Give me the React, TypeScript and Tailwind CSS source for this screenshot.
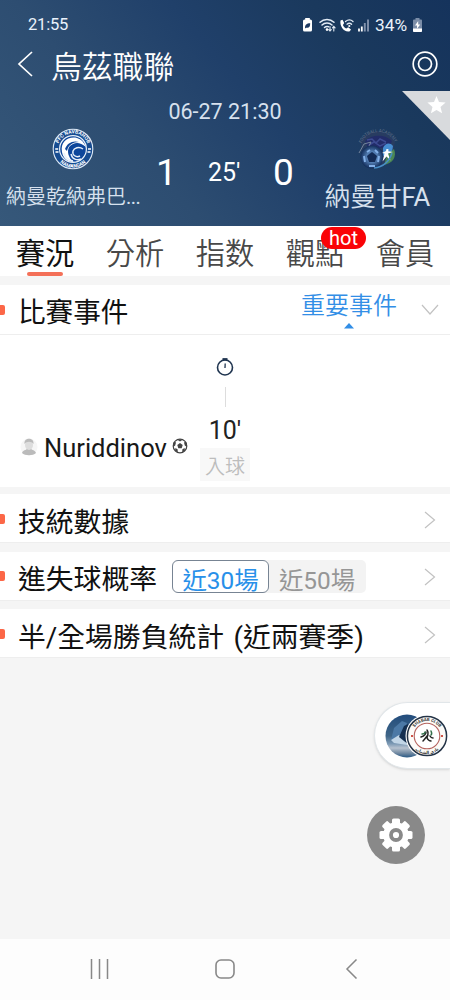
import React from "react";

const FONT = "font-['Roboto','Noto_Sans_CJK_TC',sans-serif]";

function StatusIcons() {
  return (
    <svg width="67" height="16" viewBox="0 0 67 16" className="block">
      <rect x="2.2" y="1" width="4.6" height="3" fill="#fff" />
      <rect x="0" y="2.5" width="9" height="12" rx="1.6" fill="#fff" />
      <path d="M2 11.5c0-4 1.5-5 5.200-5.200 0 3.700-1.200 5-4.200 4.400z" fill="#1b3861" />
      <g fill="none" stroke="#e3ebf5" strokeWidth="1.500" strokeLinecap="round">
        <path d="M17 5.300a10 10 0 0 1 14 0M19 8a7 7 0 0 1 10 0M21.500 10.500a4 4 0 0 1 4-.8" />
        <path d="M27 9.500v4.500m-1.300-1.300L27 14l1.300-1.300M30.800 14V9.300m-1.300 1.500 1.300-1.500 1.300 1.500" strokeWidth="1.100" />
      </g>
      <circle cx="24" cy="12.600" r="1.300" fill="#fff" />
      <path d="M37.500 3.500l2-.8 1.700 3.300-1.300 1.900c.8 1.800 1.900 2.900 3.400 3.500l1.900-1.200 2.800 2.300-1.200 1.800c-5.500 1.500-10.300-4.800-9.300-10.800z" fill="#fff" />
      <g fill="none" stroke="#e3ebf5" strokeWidth="1.300" strokeLinecap="round">
        <path d="M42.500 4.500c2.500-2 5.500-1.900 7.500 0M44 7.200c1.500-1.200 3.300-1.100 4.600.1" />
      </g>
      <circle cx="46.300" cy="9" r="1.100" fill="#fff" />
      <path d="M56 14.500v-3M58.800 14.500v-5" stroke="#fff" strokeWidth="1.800" />
      <path d="M61.800 14.500V6M65 14.500V2.500" stroke="#8091ac" strokeWidth="1.900" />
    </svg>
  );
}

function BatteryIcon() {
  return (
    <svg width="9" height="14" viewBox="0 0 9 14" className="mt-px block">
      <path d="M2.500 0h4v1.500H8a1 1 0 0 1 1 1V13a1 1 0 0 1-1 1H1a1 1 0 0 1-1-1V2.500a1 1 0 0 1 1-1h1.500z" fill="#7b8da8" />
      <path d="M0 10.500h9V13a1 1 0 0 1-1 1H1a1 1 0 0 1-1-1z" fill="#fff" />
      <path d="M5.200 3 2 7.500h2v3.200L7.200 6.500h-2z" fill="#fff" />
    </svg>
  );
}

function HomeCrest() {
  return (
    <svg width="42" height="42" viewBox="0 0 42 42" className="-mt-px block">
      <defs>
        <path id="homeTop" d="M6.200 24a15.200 15.200 0 1 1 29.600 0" />
        <path id="homeBottom" d="M3.300 25a18 18 0 0 0 35.400 0" />
      </defs>
      <circle cx="21" cy="21" r="19.800" fill="#174c91" stroke="#dce8f5" strokeWidth="1.100" />
      <circle cx="21" cy="21" r="13.400" fill="#0d469b" stroke="#e8f1fa" strokeWidth="1.200" />
      <g fill="#fff" fontSize="5" fontWeight="700" fontFamily="Roboto, sans-serif">
        <text><textPath href="#homeTop" startOffset="50%" textAnchor="middle">PFC NAVBAHOR</textPath></text>
        <text><textPath href="#homeBottom" startOffset="50%" textAnchor="middle">NAMANGAN</textPath></text>
      </g>
      <path d="M3.200 21h3M36 21h3M3.500 24h3M35.500 24h3" stroke="#fff" strokeWidth="1.500" />
      <path d="M10 24C8 14 16 8 25 10c4 1 7 4 9 9-5-4-9-5-13-3-5 2-6 7-4 12 1 3 3 5 5 6-7 0-11-4-12-10z" fill="#fff" />
      <path d="M13 21c2-6 8-9 14-7-6 0-11 3-12 9z" fill="#0d469b" />
      <path d="M31 21c-4-3-9-1-10 2-1 4 3 7 7 5m-9-2c1 5 6 7 10 5M12 25c1 4 4 7 9 8" fill="none" stroke="#e7f0fa" strokeWidth="1.400" />
    </svg>
  );
}

function AwayCrest() {
  return (
    <svg width="42" height="44" viewBox="0 0 42 44" className="-mt-px block">
      <defs>
        <path id="awayTop" d="M4 17C8 0 34 0 38 16" />
        <radialGradient id="ballShade">
          <stop offset="0" stopColor="#122b58" />
          <stop offset=".45" stopColor="#547fb5" />
          <stop offset="1" stopColor="#132e5b" />
        </radialGradient>
      </defs>
      <path d="M4 14C8 0 33 0 38 14L35 28C30 43 10 43 5 29z" fill="#283c61" />
      <path d="M8 13c7-7 20-7 27 0l-3 7H11z" fill="#222c69" />
      <text fontSize="4.300" fill="#65748c" fontFamily="Roboto, sans-serif"><textPath href="#awayTop" startOffset="50%" textAnchor="middle">FOOTBALL ACADEMY</textPath></text>
      <path d="M10 12l5-1 4 4 4-4 6 3M12 17l5-3 6 4 6-3" fill="none" stroke="#3d4b91" strokeWidth="1.500" />
      <path d="M2 25l5-9 7-2-2 4" fill="none" stroke="#75859d" />
      <circle cx="15" cy="29" r="11.500" fill="url(#ballShade)" />
      <path d="M15 24l5 4-2 6h-6l-2-6z" fill="#142b55" />
      <path d="M10 24l3-2m5 0 3 3M7 28l1 6m14-6-1 6m-9 4h6" stroke="#83b0e8" strokeWidth="2" />
      <path d="M26 20c2-5 7-6 10-2l-1 6-9 4z" fill="#468dd1" />
      <path d="M37 21c3 8-1 14-10 16l3-10z" fill="#4b8855" />
      <path d="M25 25l4-2 .5-2 2 .2-.2 2 4.700.8-5 1.500 2.500 7-4-4-4 5 2-8z" fill="#fff" />
      <path d="M17 40c10-1 15-6 18-15" fill="none" stroke="#488dc7" strokeWidth="1.500" />
    </svg>
  );
}

function Header() {
  return (
    <header className="h-[226px] bg-[linear-gradient(50deg,#36587a_0%,#2d4d71_32%,#20406a_56%,#1a395d_78%,#15335c_100%)] text-[#eaf2fb]">
      <div className="flex h-[45px] items-start pt-[17px] pl-7 text-[16.5px] leading-4">
        <span className="w-[275px] tracking-[-0.2px]">21:55</span>
        <StatusIcons />
        <span className="ml-[5px] w-[38px] text-[17.300px]">34%</span>
        <BatteryIcon />
      </div>
      <div className="flex h-[46px] items-start">
        <svg width="16" height="26" viewBox="0 0 16 26" className="mt-[6px] ml-[17px]">
          <path d="M15 1 2 13l13 12" fill="none" stroke="#fff" strokeWidth="1.700" />
        </svg>
        <h1 className="ml-[18px] w-[361px] pt-[2px] text-[30.800px] leading-[42px] font-[350] text-white">烏茲職聯</h1>
        <svg width="26" height="26" viewBox="0 0 26 26" className="mt-[6px]">
          <g fill="none" stroke="#fff" strokeWidth="1.700">
            <circle cx="13" cy="13" r="11.800" />
            <circle cx="13" cy="13" r="6.500" />
          </g>
        </svg>
      </div>
      <div className="flex h-[38px] justify-between">
        <div className="w-12" />
        <time className="pt-[8px] text-[21.500px] leading-[26px] text-[#d7e1ee]">06-27 21:30</time>
        <svg width="48" height="49" viewBox="0 0 48 49" className="block overflow-visible">
          <path d="M0 0h48v49z" fill="#d8dadd" />
          <path d="m34.500 5 2.500 6.100 6.600.5-5.100 4.300 1.600 6.400-5.600-3.400-5.600 3.400 1.600-6.400-5.100-4.300 6.600-.5z" fill="#fff" />
        </svg>
      </div>
      <div className="grid h-[97px] grid-cols-[145px_160px_145px]">
        <div className="flex flex-col items-center">
          <HomeCrest />
          <span className="mt-[13px] w-[145px] pl-[6px] text-[20px] leading-[28px] font-[350] whitespace-nowrap text-[#d7e1ee]">納曼乾納弗巴<span className="font-normal tracking-[-0.5px]">...</span></span>
        </div>
        <div className="flex items-center pb-[9px]">
          <span className="w-[61px] pl-[11px] text-[37px] leading-10 text-white">1</span>
          <span className="w-[67px] pl-[2px] text-[25px] leading-8 text-white">25'</span>
          <span className="text-[37px] leading-10 text-white">0</span>
        </div>
        <div className="flex flex-col items-center">
          <AwayCrest />
          <span className="mt-[8px] text-[25.600px] leading-[34px] font-[350] whitespace-nowrap text-[#d7e1ee]">納曼甘<span className="font-normal">FA</span></span>
        </div>
      </div>
    </header>
  );
}

const tabs = ["賽況", "分析", "指数", "觀點", "會員"];

function Tabs() {
  return (
    <nav className="grid h-[50px] grid-cols-5 bg-white text-[29.300px] leading-[56px] text-[#484848]">
      {tabs.map((tab, i) => (
        <div key={tab} className={i === 0 ? "relative h-[50px] text-center font-normal text-[#111]" : "relative h-[50px] text-center font-[350]"}>
          {tab}
          {i === 0 && <span className="absolute bottom-0 left-[27px] h-1 w-[36px] rounded-full bg-[#f47058]" />}
          {i === 3 && (
            <span className="absolute top-px left-[51px] h-[22px] w-[45px] rounded-full bg-[#fa0307] text-center text-[20px] leading-[23px] font-normal text-white">hot</span>
          )}
        </div>
      ))}
    </nav>
  );
}

function Marker() {
  return <span className="h-[10px] w-[5px] shrink-0 rounded-r-[2px] bg-[#fc6747]" />;
}

function Chevron() {
  return (
    <svg width="12" height="18" viewBox="0 0 12 18" className="mt-[2px] mr-[14px] ml-auto">
      <path d="m1 1 9.500 8L1 17" fill="none" stroke="#c2c2c2" strokeWidth="1.200" />
    </svg>
  );
}

function Row({ title, children }: { title: string; children?: React.ReactNode }) {
  return (
    <section className="flex h-[49px] items-center border-b border-[#eee] bg-white pt-px">
      <Marker />
      <h2 className="ml-[13px] pt-[8px] text-[27.800px] leading-10 font-normal whitespace-nowrap text-[#111] [word-spacing:2.500px]">{title}</h2>
      {children}
      <Chevron />
    </section>
  );
}

function Events() {
  return (
    <div className="grid h-[152px] grid-cols-[200px_50px_200px] bg-white">
      <div className="flex items-start pt-[96px] pl-[20px]">
        <svg width="18" height="20" viewBox="0 0 18 20" className="mt-[6px]">
          <circle cx="9" cy="10" r="8.500" fill="#f6f6f6" />
          <path d="M2 16c1-3 4-3 5-4h4c1 1 4 1 5 4-3 3-11 3-14 0z" fill="#bbb" />
          <ellipse cx="9" cy="8" rx="4" ry="5" fill="#ddd" />
          <path d="M4.500 7c-1-7 10-7 9 0-2-3-7-3-9 0z" fill="#bbb" />
        </svg>
        <span className="ml-[6px] w-[128px] text-[25.500px] leading-[34px] text-[#181818]">Nuriddinov</span>
        <svg width="16" height="16" viewBox="0 0 16 16" className="mt-[7px] shrink-0">
          <circle cx="8" cy="8" r="6.800" fill="#fff" stroke="#444" strokeWidth="1.200" />
          <path d="m8 5 2.700 2-1 3.200H6.300l-1-3.200zM5 1.500h6L8 3.500zM1 6l1-2.500 2 1-.8 3L1 9zm14 0-1-2.500-2 1 .8 3L15 9zM3 13l.4-3 2.200 1.200.2 3zm10 0-.4-3-2.200 1.200-.2 3z" fill="#444" />
        </svg>
      </div>
      <div className="flex flex-col items-center pt-[22px]">
        <svg width="18" height="20" viewBox="0 0 18 20" className="block">
          <circle cx="9" cy="10.500" r="7.500" fill="none" stroke="#203550" strokeWidth="1.600" />
          <path d="M6.500 2.200h5" stroke="#203550" strokeWidth="2.200" />
          <path d="M9.200 6.500 9 11" stroke="#203550" strokeWidth="1.300" />
        </svg>
        <span className="mt-[10px] h-[20px] w-px bg-[#ddd]" />
        <span className="mt-[8px] text-[25px] leading-[32px] text-[#222]">10'</span>
        <span className="mt-px h-[33px] w-[50px] bg-[#f8f8f8] text-center text-[20px] leading-[39px] font-[350] text-[#bdbdbd]">入球</span>
      </div>
    </div>
  );
}

function ClubBadge() {
  return (
    <svg width="64" height="48" viewBox="0 0 64 48" className="block">
      <defs>
        <linearGradient id="stadium" x2="0" y2="1">
          <stop stopColor="#234d7d" />
          <stop offset=".5" stopColor="#3f6587" />
          <stop offset=".68" stopColor="#7d9ab5" />
          <stop offset=".78" stopColor="#b7c2cf" />
          <stop offset=".9" stopColor="#7189a1" />
          <stop offset="1" stopColor="#295985" />
        </linearGradient>
        <path id="clubTop" d="M27 24a15 15 0 0 1 30 0" />
        <path id="clubBottom" d="M24 24a18 18 0 0 0 36 0" />
      </defs>
      <circle cx="22" cy="24" r="21.500" fill="url(#stadium)" />
      <path d="m6 28 3-12 8-7 5 2-4 18z" fill="#4c79a6" />
      <path d="m6 28 8-5 8 7v3L9 31z" fill="#c1d5e6" />
      <path d="m14 25 5-11 4-2v20l-4-3z" fill="#142f50" />
      <circle cx="42" cy="24" r="21.500" fill="#fff" />
      <circle cx="42" cy="24" r="19.600" fill="#fcfbf8" stroke="#243346" strokeWidth="1.500" />
      <circle cx="42" cy="24" r="12.800" fill="#fff" stroke="#b5635e" strokeWidth="1.100" />
      <g fill="#333" fontSize="4.300" fontWeight="700" fontFamily="Roboto, 'DejaVu Sans', sans-serif">
        <text><textPath href="#clubTop" startOffset="50%" textAnchor="middle">SHABAB CLUB</textPath></text>
        <text><textPath href="#clubBottom" startOffset="50%" textAnchor="middle">نادي الشباب</textPath></text>
      </g>
      <path d="M26 24h2M56 24h2" stroke="#ce5549" strokeWidth="2" />
      <g fill="none" stroke="#222" strokeWidth="1.500" strokeLinecap="round">
        <path d="M36 25c3-1 5-3 5-5M38 29c2-2 3-4 5-6M42 18c2 2 1 5 0 8M42 26c1 2 2 3 4 3M45 24c1 2 2 2 3 2" />
        <path d="M37 22c2 0 3-1 3-2M46 19c1 2 1 3 0 4" stroke="#34704b" />
      </g>
    </svg>
  );
}

function SettingsButton() {
  return (
    <button aria-label="設定" className="flex size-[58px] items-center justify-center rounded-full bg-[#898989]">
      <svg width="34" height="34" viewBox="-17 -17 34 34">
        <g fill="#fff">
          <circle r="12.800" />
          {[0, 45, 90, 135, 180, 225, 270, 315].map((angle) => (
            <rect key={angle} x="-4" y="-16.500" width="8" height="9" rx="1.600" transform={`rotate(${angle})`} />
          ))}
        </g>
        <circle r="5" fill="none" stroke="#898989" strokeWidth="3.800" />
      </svg>
    </button>
  );
}

export default function App() {
  return (
    <div className={`${FONT} flex h-[1000px] w-[450px] flex-col overflow-hidden bg-[#f5f5f5]`}>
      <Header />
      <Tabs />
      <main className="mt-[9px] flex h-[654px] flex-col">
        <section className="flex h-[50px] shrink-0 items-center border-b border-[#eee] bg-white">
          <Marker />
          <h2 className="ml-[13px] w-[283px] pt-[7px] text-[27.600px] leading-10 font-normal text-[#111]">比賽事件</h2>
          <div className="flex flex-col items-center pb-[3px] text-[#328ee6]">
            <span className="h-[36px] text-[24px] leading-[37px] font-[350]">重要事件</span>
            <svg width="10" height="6" viewBox="0 0 10 6" className="-mt-px block"><path d="m5 0 5 5.500H0z" fill="#328ee6" /></svg>
          </div>
          <svg width="18" height="11" viewBox="0 0 18 11" className="ml-[24px]">
            <path d="m1 1 8 9 8-9" fill="none" stroke="#c2c2c2" strokeWidth="1.200" />
          </svg>
        </section>
        <Events />
        <div className="mt-[7px] flex flex-col gap-[8.500px]">
          <Row title="技統數據" />
          <Row title="進失球概率">
            <div className="mt-px ml-[15px] flex h-[33px] w-[194px] rounded-[5px] bg-[#f3f3f3] text-[24.400px] leading-[40px]">
              <span className="h-[33px] w-[97px] rounded-[6px] border border-[#778493] bg-white text-center text-[#2890e9]">近30場</span>
              <span className="h-[33px] w-[96px] text-center leading-[42px] text-[#969696]">近50場</span>
            </div>
          </Row>
          <Row title="半/全場勝負統計 (近兩賽季)" />
        </div>
        <div className="mt-[44px] flex flex-col items-end">
          <div className="flex h-[67px] w-[76px] items-center rounded-l-full border border-r-0 border-[#e1e6e9] bg-white pl-[10px] shadow-sm">
            <ClubBadge />
          </div>
          <div className="mt-[37px] mr-[25px]">
            <SettingsButton />
          </div>
        </div>
      </main>
      <footer className="flex h-[61px] items-center justify-between bg-[#fdfdfd] px-[89px] pb-[2px]">
        <svg width="20" height="20" viewBox="0 0 20 20"><path d="M2.500 0v20M10.500 0v20M18.500 0v20" stroke="#888" strokeWidth="1.500" /></svg>
        <svg width="20" height="20" viewBox="0 0 20 20"><rect x="1" y="1" width="18" height="18" rx="5" fill="none" stroke="#888" strokeWidth="1.600" /></svg>
        <svg width="20" height="20" viewBox="0 0 20 20"><path d="M15.500.5 6 10l9.500 9.500" fill="none" stroke="#888" strokeWidth="1.500" /></svg>
      </footer>
    </div>
  );
}
